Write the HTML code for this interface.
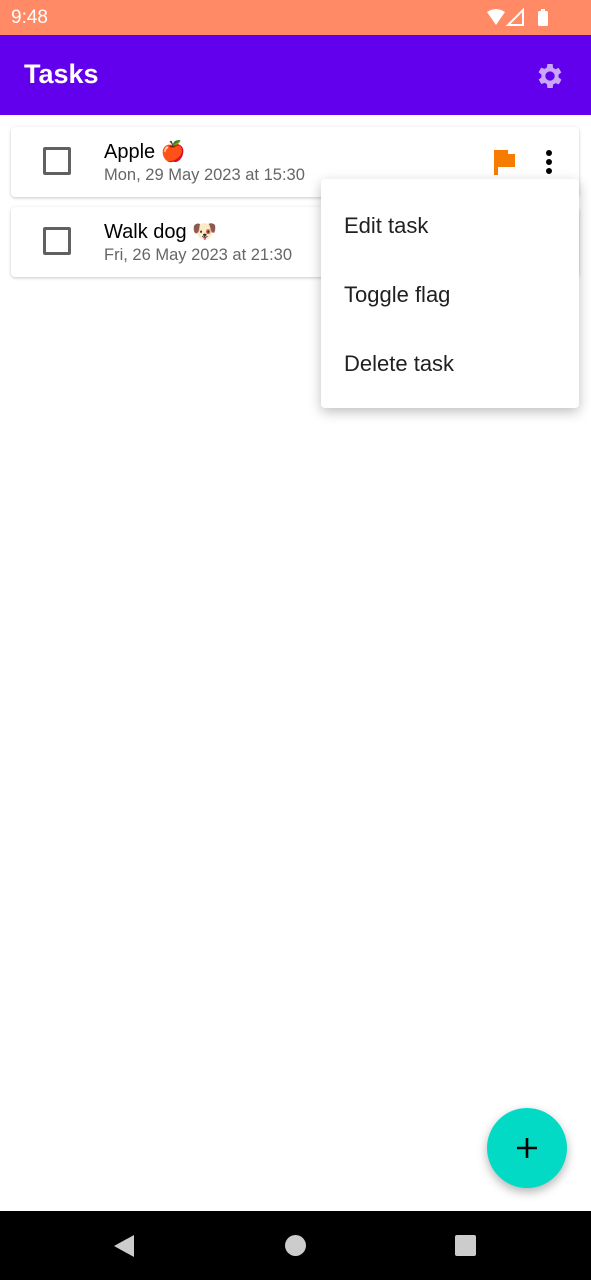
<!DOCTYPE html>
<html><head><meta charset="utf-8"><style>
*{margin:0;padding:0;box-sizing:border-box}
body{width:591px;height:1280px;position:relative;background:#fff;font-family:"Liberation Sans",sans-serif;overflow:hidden}
.status{position:absolute;top:0;left:0;width:591px;height:35px;background:#ff8a65;color:#fff;font-size:19px}
.bar{position:absolute;top:35px;left:0;width:591px;height:80px;background:#6200ee;color:#fff}
.card{position:absolute;left:11px;width:568px;height:70px;background:#fff;border-radius:4px;box-shadow:0 1px 3px rgba(0,0,0,.22)}
.cb{position:absolute;left:32px;top:20px;width:28px;height:28px;border:3px solid #616161;border-radius:2px}
.t{position:absolute;left:93px;top:12px;font-size:20px;color:#000}
.d{position:absolute;left:93px;top:39px;font-size:16.5px;color:#666}
.menu{position:absolute;left:321px;top:179px;width:258px;height:229px;background:#fff;border-radius:4px;box-shadow:0 4px 12px rgba(0,0,0,.25)}
.mi{position:absolute;left:23px;font-size:22px;color:#212121}
.nav{position:absolute;top:1211px;left:0;width:591px;height:69px;background:#000}
.fab{position:absolute;left:487px;top:1108px;width:80px;height:80px;border-radius:50%;background:#03dac5;box-shadow:0 4px 10px rgba(0,0,0,.3)}
</style></head><body>
<div class="status"><span style="position:absolute;left:11px;top:7px">9:48</span>
<svg style="position:absolute;left:485px;top:8px" width="70" height="20" viewBox="0 0 70 20">
<path d="M2 4 Q11 -2 20 4 L11 17Z" fill="#fff"/>
<path d="M38 2 L38 17 L23 17Z" fill="none" stroke="#fff" stroke-width="2"/>
<rect x="53" y="3" width="10" height="15" rx="1.5" fill="#fff"/><rect x="56" y="1" width="4" height="3" fill="#fff"/>
</svg></div>
<div class="bar"><span style="position:absolute;left:24px;top:24px;font-size:27px;font-weight:bold">Tasks</span>
<svg style="position:absolute;left:534px;top:25px" width="32" height="32" viewBox="0 0 24 24"><path fill="#c9a6f7" fill-rule="evenodd" d="M19.4 13a7.5 7.5 0 000-2l2.1-1.6-2-3.5-2.5 1a7 7 0 00-1.7-1L15 3h-4l-.4 2.7a7 7 0 00-1.7 1l-2.5-1-2 3.5L6.6 11a7.5 7.5 0 000 2l-2.1 1.6 2 3.5 2.5-1a7 7 0 001.7 1L11 21h4l.4-2.7a7 7 0 001.7-1l2.5 1 2-3.5zM13 15.5a3.5 3.5 0 110-7 3.5 3.5 0 010 7z" transform="translate(-1 0)"/></svg></div>
<div class="card" style="top:127px"><div class="cb"></div><div class="t">Apple 🍎</div><div class="d">Mon, 29 May 2023 at 15:30</div>
<svg style="position:absolute;left:482px;top:21px" width="24" height="28" viewBox="0 0 24 28"><path d="M1 2h4v25H1z" fill="#f57c00"/><path d="M5 2h10v4h7v13H5z" fill="#f57c00"/></svg>
<svg style="position:absolute;left:533px;top:22px" width="10" height="26"><circle cx="5" cy="4" r="3" fill="#000"/><circle cx="5" cy="13" r="3" fill="#000"/><circle cx="5" cy="22" r="3" fill="#000"/></svg>
</div>
<div class="card" style="top:207px"><div class="cb"></div><div class="t">Walk dog 🐶</div><div class="d">Fri, 26 May 2023 at 21:30</div></div>
<div class="menu"><div class="mi" style="top:34px">Edit task</div><div class="mi" style="top:103px">Toggle flag</div><div class="mi" style="top:172px">Delete task</div></div>
<div class="fab"><svg style="position:absolute;left:28px;top:28px" width="24" height="24"><path d="M12 2v20M2 12h20" stroke="#000" stroke-width="2.6"/></svg></div>
<div class="nav">
<svg style="position:absolute;left:113px;top:23px" width="22" height="24"><path d="M21 1L1 12l20 11z" fill="#ccc"/></svg>
<div style="position:absolute;left:285px;top:24px;width:21px;height:21px;border-radius:50%;background:#ccc"></div>
<div style="position:absolute;left:455px;top:24px;width:21px;height:21px;border-radius:2px;background:#ccc"></div>
</div>
</body></html>
